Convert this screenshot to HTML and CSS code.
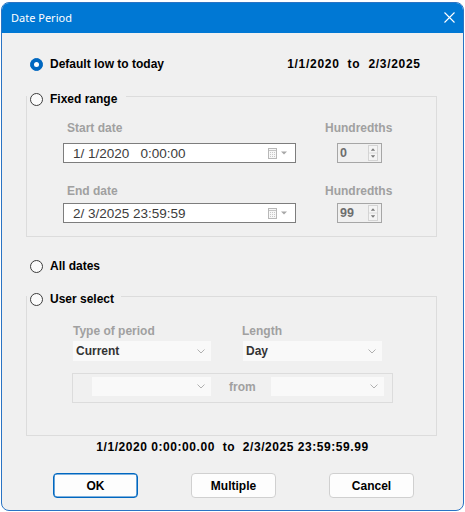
FILE: index.html
```html
<!DOCTYPE html>
<html>
<head>
<meta charset="utf-8">
<link rel="stylesheet" href="styles.css">
</head>
<body>
<div class="window">
  <div class="titlebar">
    <span class="title">Date Period</span>
    <svg class="close" width="11" height="11" viewBox="0 0 11 11"><path d="M0.5 0.5L10.5 10.5M10.5 0.5L0.5 10.5" stroke="#fff" stroke-width="1.1" fill="none"/></svg>
  </div>
  <div class="content">
    <div class="row row-default">
      <div class="opt"><span class="radio checked"><span class="dot"></span></span><span class="lbl">Default low to today</span></div>
      <span class="lbl range">1/1/2020  to  2/3/2025</span>
    </div>

    <fieldset class="group group-fixed">
      <legend><span class="radio"></span><span class="lbl">Fixed range</span></legend>
      <div class="fixed-grid">
        <div class="dis lbl-a pad4">Start date</div>
        <div class="dis lbl-a">Hundredths</div>
        <div class="datebox box-a"><span class="dtext">1/ 1/2020   0:00:00</span><span class="cal"><svg width="9" height="11" viewBox="0 0 9 11"><rect x="0.5" y="0.5" width="8" height="10" fill="#f7f7f7" stroke="#b8b8b8"/><path d="M1 2.5h7" stroke="#c4c4c4"/><path d="M2 4.5h1M4 4.5h1M6 4.5h1M2 6.5h1M4 6.5h1M6 6.5h1M2 8.5h1M4 8.5h1M6 8.5h1" stroke="#c8c8c8"/></svg></span><svg class="tri" width="6" height="4" viewBox="0 0 6 4"><path d="M0 0.5h6L3 3.5z" fill="#a8a8a8"/></svg></div>
        <div class="spinbox box-a"><span class="num">0</span><svg class="spin" width="10" height="16" viewBox="0 0 10 16"><rect x="0.5" y="0.5" width="9" height="15" fill="#f4f4f4" stroke="#d4d4d4"/><path d="M1 8h8" stroke="#dcdcdc"/><path d="M2.8 5.8h4.4L5 3.3z" fill="#7a7a7a"/><path d="M2.8 10.2h4.4L5 12.7z" fill="#7a7a7a"/></svg></div>
        <div class="dis lbl-b pad4">End date</div>
        <div class="dis lbl-b">Hundredths</div>
        <div class="datebox box-b"><span class="dtext">2/ 3/2025 23:59:59</span><span class="cal"><svg width="9" height="11" viewBox="0 0 9 11"><rect x="0.5" y="0.5" width="8" height="10" fill="#f7f7f7" stroke="#b8b8b8"/><path d="M1 2.5h7" stroke="#c4c4c4"/><path d="M2 4.5h1M4 4.5h1M6 4.5h1M2 6.5h1M4 6.5h1M6 6.5h1M2 8.5h1M4 8.5h1M6 8.5h1" stroke="#c8c8c8"/></svg></span><svg class="tri" width="6" height="4" viewBox="0 0 6 4"><path d="M0 0.5h6L3 3.5z" fill="#a8a8a8"/></svg></div>
        <div class="spinbox box-b"><span class="num">99</span><svg class="spin" width="10" height="16" viewBox="0 0 10 16"><rect x="0.5" y="0.5" width="9" height="15" fill="#f4f4f4" stroke="#d4d4d4"/><path d="M1 8h8" stroke="#dcdcdc"/><path d="M2.8 5.8h4.4L5 3.3z" fill="#7a7a7a"/><path d="M2.8 10.2h4.4L5 12.7z" fill="#7a7a7a"/></svg></div>
      </div>
    </fieldset>

    <div class="row row-all">
      <div class="opt"><span class="radio"></span><span class="lbl">All dates</span></div>
    </div>

    <fieldset class="group group-user">
      <legend><span class="radio"></span><span class="lbl">User select</span></legend>
      <div class="user-grid">
        <div class="dis">Type of period</div>
        <div class="dis len">Length</div>
        <div class="combo"><span class="ctext">Current</span><svg class="chev" width="8" height="5" viewBox="0 0 8 5"><path d="M0.5 0.5L4 4L7.5 0.5" stroke="#b0b0b0" fill="none"/></svg></div>
        <div class="combo"><span class="ctext">Day</span><svg class="chev" width="8" height="5" viewBox="0 0 8 5"><path d="M0.5 0.5L4 4L7.5 0.5" stroke="#b0b0b0" fill="none"/></svg></div>
      </div>
      <div class="frame">
        <div class="combo combo-s1"><svg class="chev" width="8" height="5" viewBox="0 0 8 5"><path d="M0.5 0.5L4 4L7.5 0.5" stroke="#b0b0b0" fill="none"/></svg></div>
        <span class="dis from">from</span>
        <div class="combo combo-s2"><svg class="chev" width="8" height="5" viewBox="0 0 8 5"><path d="M0.5 0.5L4 4L7.5 0.5" stroke="#b0b0b0" fill="none"/></svg></div>
      </div>
    </fieldset>

    <div class="summary">1/1/2020 0:00:00.00  to  2/3/2025 23:59:59.99</div>

    <div class="buttons">
      <button class="btn btn-default">OK</button>
      <button class="btn">Multiple</button>
      <button class="btn">Cancel</button>
    </div>
  </div>
</div>
</body>
</html>
```
FILE: styles.css
```css
* { box-sizing: border-box; }
html, body { margin: 0; padding: 0; }
body {
  width: 465px;
  height: 512px;
  overflow: hidden;
  background: #ffffff;
  font-family: "Liberation Sans", Arial, sans-serif;
}
.window {
  margin: 2px 0 0 1px;
  width: 463px;
  height: 509px;
  border: 1px solid #2a74c4;
  border-radius: 8px;
  background: #f0f0f0;
  overflow: hidden;
  display: flex;
  flex-direction: column;
}
.titlebar {
  flex: none;
  height: 30px;
  background: #0078d4;
  display: flex;
  align-items: center;
  justify-content: space-between;
  padding: 0 8px 0 9px;
}
.title {
  font-family: "Noto Sans", "Open Sans", sans-serif;
  font-size: 11px;
  color: #ffffff;
  margin-top: -1px;
}
.close { display: block; margin-top: -1px; }
.content { flex: 1; display: flex; flex-direction: column; }

.row { display: flex; align-items: center; height: 16px; }
.row-default { margin-top: 23px; padding: 0 43px 0 28px; justify-content: space-between; }
.row-all { margin-top: 21px; padding-left: 28px; }
.opt { display: flex; align-items: center; }
.lbl {
  font-size: 12px;
  font-weight: bold;
  line-height: 16px;
  color: #000;
  white-space: pre;
}
.range { letter-spacing: 0.7px; margin-right: -0.7px; }
.opt .lbl, legend .lbl { margin-left: 7px; }
.radio {
  width: 13px;
  height: 13px;
  border-radius: 50%;
  border: 1px solid #3c3c3c;
  background: #fbfbfb;
  display: flex;
  align-items: center;
  justify-content: center;
  flex: none;
}
.radio.checked { background: #0067c0; border-color: #0067c0; }
.radio .dot { width: 5px; height: 5px; border-radius: 50%; background: #ffffff; }

.group {
  margin: 14px 0 0 24px;
  width: 411px;
  border: 1px solid #dcdcdc;
  padding: 0;
  min-width: 0;
}
.group legend {
  margin: 0;
  padding: 5px 9px 0 3px;
  height: 21px;
  display: flex;
  align-items: center;
}
.group-user { margin-top: 12px; }
.group-user legend { padding-right: 7px; }

.dis {
  font-size: 12px;
  font-weight: bold;
  line-height: 14px;
  height: 14px;
  color: #a0a0a0;
  white-space: nowrap;
}
.pad4 { padding-left: 4px; }

.fixed-grid {
  display: grid;
  grid-template-columns: 233px 64px;
  column-gap: 29px;
  margin: 14px 0 13px 36px;
}
.lbl-b { margin-top: 21px; }
.box-a { margin-top: 8px; }
.box-b { margin-top: 5px; }

.datebox {
  height: 20px;
  background: #ffffff;
  border: 1px solid #7d7d7d;
  display: flex;
  align-items: center;
  padding: 0 8px 0 9px;
}
.dtext {
  font-size: 13.5px;
  color: #3c3c3c;
  white-space: pre;
}
.cal { margin-left: auto; display: flex; }
.cal svg { display: block; }
.tri { display: block; margin-left: 4px; }

.spinbox {
  margin-left: 12px;
  width: 45px;
  height: 20px;
  border: 1px solid #a6a6a6;
  background: #f0f0f0;
  display: flex;
  align-items: center;
  padding: 0 3px 0 2px;
}
.num {
  font-size: 12.5px;
  font-weight: bold;
  color: #6d6d6d;
}
.spin { display: block; margin-left: auto; }

.user-grid {
  display: grid;
  grid-template-columns: 138px 139px;
  column-gap: 32px;
  row-gap: 3px;
  margin: 17px 0 0 46px;
}
.len { margin-left: -1px; }
.combo {
  height: 20px;
  background: #f9f9f9;
  display: flex;
  align-items: center;
  padding: 0 6px 0 3px;
}
.ctext {
  font-size: 12px;
  font-weight: bold;
  color: #333333;
}
.chev { display: block; margin-left: auto; }

.frame {
  margin: 12px 0 32px 45px;
  width: 321px;
  height: 30px;
  border: 1px solid #dcdcdc;
  display: flex;
  align-items: flex-start;
  padding: 3px 0 0 19px;
}
.combo-s1 { width: 119px; height: 19px; }
.combo-s2 { width: 113px; height: 19px; }
.from { margin: 3px 15px 0 18px; }

.summary {
  margin-top: 4px;
  height: 14px;
  line-height: 14px;
  text-align: center;
  font-size: 12px;
  font-weight: bold;
  letter-spacing: 0.55px;
  color: #000;
  white-space: pre;
}

.buttons {
  margin-top: 19px;
  padding-left: 51px;
  display: flex;
  gap: 53px;
}
.btn {
  width: 85px;
  height: 25px;
  border: 1px solid #d0d0d0;
  border-radius: 4px;
  background: #fdfdfd;
  font-family: "Liberation Sans", Arial, sans-serif;
  font-size: 12px;
  font-weight: bold;
  color: #000;
  padding: 0;
}
.btn-default {
  border-color: #0067c0;
  box-shadow: inset 0 0 0 0.6px #0067c0;
}
```
